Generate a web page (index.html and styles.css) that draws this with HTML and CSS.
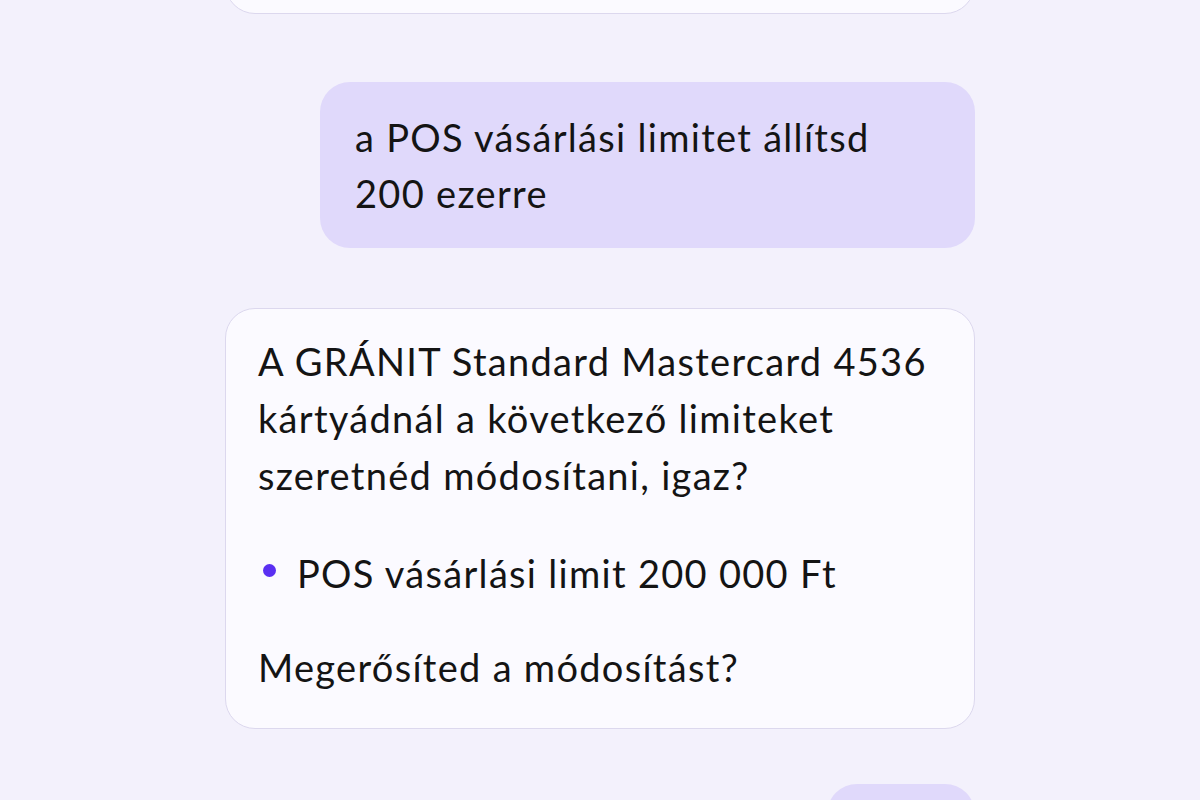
FILE: index.html
```html
<!DOCTYPE html>
<html lang="hu">
<head>
<meta charset="utf-8">
<title>Chat</title>
<link rel="stylesheet" href="styles.css">
</head>
<body>
<main class="chat">
  <div class="bubble bot prev"></div>

  <div class="row row-user first">
    <div class="bubble user">
      <p>a POS vásárlási limitet állítsd 200 ezerre</p>
    </div>
  </div>

  <div class="row row-bot">
    <div class="bubble bot">
      <p class="para">A GRÁNIT Standard Mastercard 4536 kártyádnál a következő limiteket szeretnéd módosítani, igaz?</p>
      <ul class="list">
        <li class="item"><span class="dot"></span><span>POS vásárlási limit 200 000 Ft</span></li>
      </ul>
      <p class="para last">Megerősíted a módosítást?</p>
    </div>
  </div>

  <div class="row row-user second">
    <div class="bubble user stub"></div>
  </div>
</main>
</body>
</html>
```

FILE: styles.css
```css
html, body {
  margin: 0;
  padding: 0;
}

body {
  background: #f3f1fc;
  font-family: "Lato", "Noto Sans", sans-serif;
  color: #141414;
  overflow: hidden;
  height: 800px;
}

.chat {
  width: 750px;
  margin: 0 auto;
  display: flex;
  flex-direction: column;
}

.row {
  display: flex;
}

.row-user {
  justify-content: flex-end;
}

.row-user.first {
  margin-top: 68px;
}

.row-bot {
  margin-top: 60px;
}

.row-user.second {
  margin-top: 55px;
}

.bubble {
  box-sizing: border-box;
  border-radius: 30px;
  font-size: 38px;
  letter-spacing: 1.3px;
}

.bubble p {
  margin: 0;
}

.user {
  background: #e0d9fb;
  max-width: 655px;
  padding: 27px 35px;
  line-height: 56px;
}

.stub {
  width: 148px;
  height: 120px;
}

.bot {
  width: 750px;
  background: #fbfaff;
  border: 1.5px solid #dcd8ee;
  padding: 24px 32px 32px 32px;
  line-height: 57px;
}

.prev {
  height: 214px;
  margin-top: -200px;
}

.list {
  list-style: none;
  margin: 41px 0 0 0;
  padding: 0;
}

.item {
  display: flex;
  align-items: center;
}

.dot {
  width: 13px;
  height: 13px;
  border-radius: 50%;
  background: #5a2ff2;
  margin: 0 21px 6px 5px;
  flex: none;
}

.para.last {
  margin-top: 37px;
}
```
